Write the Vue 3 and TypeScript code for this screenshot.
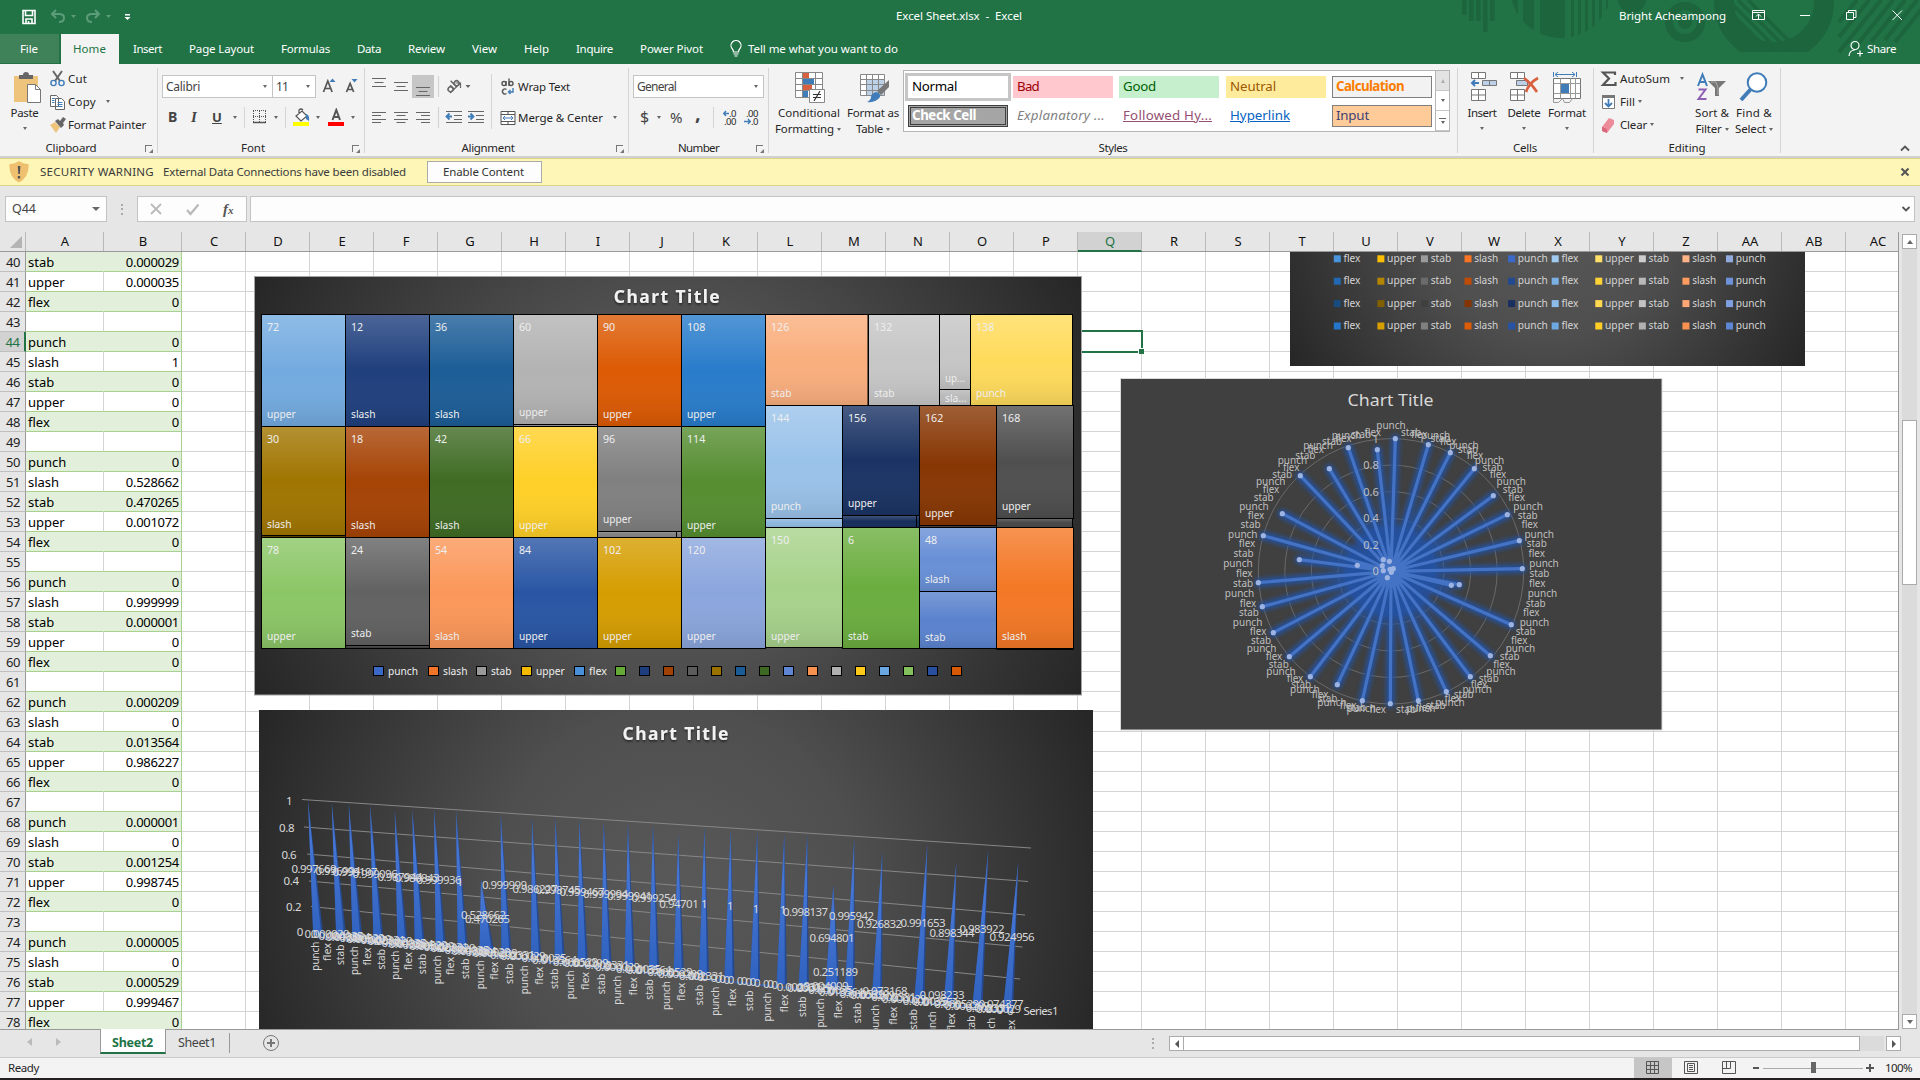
<script setup lang="ts">
interface Row { n: number; a: string; b: string }
interface Tile { x: number; y: number; r: number; b: number; c: string; n?: string; t?: string; ty?: number }

// Tightens or loosens tracking so that a label takes the given width.
const vFit = {
  mounted(el: HTMLElement, binding: { value: number }) {
    const range = document.createRange()
    range.selectNodeContents(el)
    const natural = range.getBoundingClientRect().width
    const count = (el.textContent ?? '').length
    if (count > 0) el.style.letterSpacing = `${(binding.value - natural) / count}px`
  },
}

const tabs: [string, number, number][] = [
  ['Insert', 56, 29], ['Page Layout', 92, 65], ['Formulas', 76, 49], ['Data', 51, 24], ['Review', 64, 37],
  ['View', 52, 25], ['Help', 52, 25], ['Inquire', 64, 37], ['Power Pivot', 91, 63],
]

const styleCells: { t: string; k: string; w: number }[] = [
  { t: 'Normal', k: 'normal', w: 45 }, { t: 'Bad', k: 'bad', w: 22 }, { t: 'Good', k: 'good', w: 33 },
  { t: 'Neutral', k: 'neutral', w: 46 }, { t: 'Calculation', k: 'calc', w: 68 },
  { t: 'Check Cell', k: 'check', w: 64 }, { t: 'Explanatory ...', k: 'expl', w: 88 },
  { t: 'Followed Hy...', k: 'foll', w: 89 }, { t: 'Hyperlink', k: 'link', w: 60 }, { t: 'Input', k: 'input', w: 33 },
]

const columns = ['C', ...'DEFGHIJKLMNOPQRSTUVWXYZ'.split(''), 'AA', 'AB', 'AC']

const values: string[] = [
  '0.000029', '0.000035', '0', '', '0', '1', '0', '0', '0', '', '0', '0.528662', '0.470265', '0.001072', '0', '',
  '0', '0.999999', '0.000001', '0', '0', '', '0.000209', '0', '0.013564', '0.986227', '0', '',
  '0.000001', '0', '0.001254', '0.998745', '0', '', '0.000005', '0', '0.000529', '0.999467', '0',
]
const moves = ['punch', 'slash', 'stab', 'upper', 'flex', '']
const rows: Row[] = values.map((b, i) => ({ n: 40 + i, a: moves[(i + 2) % 6], b }))

const wordWidth: Record<string, number> = {
  punch: 30, slash: 24.5, stab: 20.5, upper: 28.7, flex: 18, 'up...': 20, 'sla...': 21.5,
}

const tiles: Tile[] = [
  { x: 261.5, y: 314.5, r: 345.5, b: 426.5, c: '#73abe0', n: '72', t: 'upper' },
  { x: 345.5, y: 314.5, r: 429.5, b: 426.5, c: '#1f3f7d', n: '12', t: 'slash' },
  { x: 429.5, y: 314.5, r: 513.5, b: 426.5, c: '#1c5d97', n: '36', t: 'slash' },
  { x: 513.5, y: 314.5, r: 597.5, b: 424.5, c: '#b3b3b3', n: '60', t: 'upper', ty: 416 },
  { x: 513.5, y: 424.5, r: 597.5, b: 426.5, c: '#8c8c8c' },
  { x: 597.5, y: 314.5, r: 681.5, b: 426.5, c: '#dc5a03', n: '90', t: 'upper' },
  { x: 681.5, y: 314.5, r: 765.5, b: 426.5, c: '#287ccb', n: '108', t: 'upper' },
  { x: 261.5, y: 426.5, r: 345.5, b: 535.5, c: '#a07500', n: '30', t: 'slash', ty: 528 },
  { x: 261.5, y: 535.5, r: 345.5, b: 537.5, c: '#5a4300' },
  { x: 345.5, y: 426.5, r: 429.5, b: 537.5, c: '#a64305', n: '18', t: 'slash' },
  { x: 429.5, y: 426.5, r: 513.5, b: 537.5, c: '#3f6b24', n: '42', t: 'slash' },
  { x: 513.5, y: 426.5, r: 597.5, b: 537.5, c: '#ffd027', n: '66', t: 'upper' },
  { x: 597.5, y: 426.5, r: 681.5, b: 531.5, c: '#808080', n: '96', t: 'upper', ty: 523 },
  { x: 597.5, y: 531.5, r: 676.5, b: 537.5, c: '#808080' },
  { x: 676.5, y: 531.5, r: 681.5, b: 537.5, c: '#808080' },
  { x: 681.5, y: 426.5, r: 765.5, b: 537.5, c: '#558d30', n: '114', t: 'upper' },
  { x: 261.5, y: 537.5, r: 345.5, b: 648.5, c: '#8bc666', n: '78', t: 'upper' },
  { x: 345.5, y: 537.5, r: 429.5, b: 645.5, c: '#626262', n: '24', t: 'stab', ty: 637 },
  { x: 345.5, y: 645.5, r: 429.5, b: 648.5, c: '#3c3c3c' },
  { x: 429.5, y: 537.5, r: 513.5, b: 648.5, c: '#fb9759', n: '54', t: 'slash' },
  { x: 513.5, y: 537.5, r: 597.5, b: 648.5, c: '#2855a4', n: '84', t: 'upper' },
  { x: 597.5, y: 537.5, r: 681.5, b: 648.5, c: '#d59d00', n: '102', t: 'upper' },
  { x: 681.5, y: 537.5, r: 765.5, b: 648.5, c: '#8ba6dd', n: '120', t: 'upper' },
  { x: 765.5, y: 314.5, r: 868, b: 405.5, c: '#faae7d', n: '126', t: 'stab' },
  { x: 868.5, y: 314.5, r: 939.5, b: 405.5, c: '#c6c6c6', n: '132', t: 'stab' },
  { x: 939.5, y: 314.5, r: 970.5, b: 389.5, c: '#c6c6c6', t: 'up...', ty: 382 },
  { x: 939.5, y: 389.5, r: 970.5, b: 405.5, c: '#b8b8b8', t: 'sla...', ty: 402 },
  { x: 970.5, y: 314.5, r: 1072.5, b: 405.5, c: '#ffdb5b', n: '138', t: 'punch' },
  { x: 765.5, y: 405.5, r: 842.5, b: 518.5, c: '#9ac3ea', n: '144', t: 'punch', ty: 510 },
  { x: 765.5, y: 518.5, r: 842.5, b: 527.5, c: '#8db7de' },
  { x: 842.5, y: 405.5, r: 919.5, b: 515.5, c: '#1a3364', n: '156', t: 'upper', ty: 507 },
  { x: 842.5, y: 515.5, r: 916.5, b: 527.5, c: '#152d5b' },
  { x: 916.5, y: 515.5, r: 919.5, b: 527.5, c: '#152d5b' },
  { x: 919.5, y: 405.5, r: 996.5, b: 525.5, c: '#873603', n: '162', t: 'upper', ty: 517 },
  { x: 996.5, y: 405.5, r: 1073.5, b: 518.5, c: '#4f4f4f', n: '168', t: 'upper', ty: 510 },
  { x: 996.5, y: 518.5, r: 1072.5, b: 527.5, c: '#474747' },
  { x: 765.5, y: 527.5, r: 842.5, b: 647.5, c: '#a7d28b', n: '150', t: 'upper', ty: 640 },
  { x: 842.5, y: 527.5, r: 919.5, b: 648.5, c: '#6bae3f', n: '6', t: 'stab', ty: 640 },
  { x: 919.5, y: 527.5, r: 996.5, b: 591.5, c: '#688fd6', n: '48', t: 'slash', ty: 583 },
  { x: 919.5, y: 591.5, r: 996.5, b: 648.5, c: '#5a82cd', t: 'stab', ty: 641 },
  { x: 996.5, y: 527.5, r: 1073.5, b: 648.5, c: '#f47825', t: 'slash', ty: 640 },
]

const treeLegend: { x: number; c: string; t?: string }[] = [
  { x: 373.5, c: '#3a69c8', t: 'punch' }, { x: 428.5, c: '#f17428', t: 'slash' }, { x: 476.5, c: '#999', t: 'stab' },
  { x: 521.5, c: '#f5ba00', t: 'upper' }, { x: 574.5, c: '#4891da', t: 'flex' },
  ...['#65a939', '#1d3d7d', '#a14106', '#5c5c5c', '#9b7200', '#1c5c94', '#3d6a22', '#5e86d3', '#f6904e', '#b0b0b0',
    '#fcca1b', '#6aa6df', '#84c15c', '#274f9d', '#d75806'].map((c, i) => ({ x: 615.5 + i * 24, c })),
]

// Spikes of the 3-D series: tip x/y, base x/y.
const cones: number[][] = [
  [308, 800, 317.5, 936], [331.7, 802.5, 340.5, 938], [348.7, 803.5, 356.7, 939], [370, 804.5, 377.7, 941],
  [394.7, 810.5, 401.7, 943], [412.3, 809.5, 419, 944.5], [434, 809, 440, 946.5], [456, 810.5, 462, 948.5],
  [481, 879, 486, 952], [500.7, 814.5, 505.7, 954], [532, 817.5, 535.3, 957], [555.3, 817, 559, 959],
  [579.3, 819, 582, 961], [603.7, 821, 605.7, 963.5], [628, 823, 629, 966], [653, 825, 653.3, 969],
  [678.3, 834, 678, 971.5], [704.5, 827.5, 703.2, 976], [730.7, 829, 728.7, 979], [757.3, 831, 754.3, 982],
  [784.3, 833.5, 781, 984.5], [807.3, 834.5, 803, 987], [833.3, 885, 831.7, 990], [854.3, 838.5, 849, 993],
  [882.3, 852, 876.3, 996], [927.3, 844.5, 918.7, 999], [956.3, 862, 948, 1003], [988.3, 850, 976.7, 1007],
  [1018.3, 861.5, 1007.3, 1011],
]
const conePath = (c: number[], wide: number) => {
  const w = c[1] === 879 || c[1] === 885 ? 6.5 : 4.3
  return `M${c[0]} ${c[1]}L${c[2] + w + wide} ${c[3]}L${c[2] - w} ${c[3] - 1}Z`
}

const coneLabels: [number, number, string][] = [
  [314, 868.5, '0.997669'], [338, 870.5, '0.996994'], [355, 871.5, '0.999197'], [375, 873.5, '0.999096'], [400, 877, '0.987944'],
  [417, 877.5, '0.980843'], [439, 879.5, '0.999936'], [460, 881.5, '1'], [483.5, 915, '0.528662'], [487.5, 919, '0.470265'],
  [504.5, 885, '0.999999'], [535, 888.5, '0.986227'], [558, 889.5, '0.998745'], [582, 892, '0.999467'],
  [605.5, 893.5, '0.999994'], [629.5, 895.5, '0.999941'], [654, 898, '0.999254'], [679, 904, '0.94701'],
  [704.3, 903.5, '1'], [730.3, 905.5, '1'], [756, 908.5, '1'], [783, 910, '1'], [805.5, 912, '0.998137'],
  [832, 938, '0.694801'], [835.5, 972, '0.251189'], [851.5, 916, '0.995942'], [879.5, 924, '0.926832'],
  [923, 923, '0.991653'], [952, 933, '0.898344'], [982, 929, '0.983922'], [1012, 937, '0.924956'],
  [885, 991, '0.073168'], [942, 994.5, '0.098233'], [1001, 1004, '0.074377'], [826, 985.5, '0.004009'],
]

const lowValues = ['0.002331', '0.000029', '0.000803', '0.000035', '0.013564', '0.001254', '0.000529', '0.000209', '0.000006']
const floorLabels: [number, number, string][] = []
for (let x = 300, i = 0; x < 1016; i++) {
  const y = 932.5 + (x - 305) * 0.1115
  if (x > 690 && x < 775) {
    floorLabels.push([x, y, '0'])
    x += i % 5 === 4 ? 9 : 4.3
  } else {
    const bare = x < 302 || x > 980 || i % 3 === 2
    floorLabels.push([bare ? x : x + 20, bare ? y : y + 1.5, bare ? '0' : lowValues[i % 9]])
    x += x < 480 ? 7 : 10.5
  }
}

const categoryX = [
  226, 262, 302, 343, 382, 424, 465, 506, 548, 591, 632, 677, 721, 762, 808, 854, 897, 944, 991, 1035, 1084, 1132, 1179,
  1227, 1278, 1325, 1377, 1427, 1476, 1529, 1582, 1632, 1688, 1742, 1794, 1852, 1907, 1960, 2019, 2077, 2134, 2193, 2253, 2313,
]
const categories = categoryX.map((v, i) => ({
  x: 240 + v / 3 + 3.5, y: 700 + (725 + (v - 226) * 0.1125) / 3, t: ['punch', 'flex', 'stab'][i % 3],
}))

const spikes: number[][] = [
  [496, 86], [595, 104], [661, 128], [733, 176], [790, 257], [832, 314], [868, 392], [877, 476], [688, 524], [664, 526],
  [844, 644], [781, 737], [721, 800], [649, 845], [565, 872], [481, 881], [397, 872], [322, 824], [241, 800], [178, 740],
  [130, 668], [97, 590], [85, 518], [208, 449], [382, 466], [100, 377], [157, 311], [211, 197], [298, 176], [355, 113],
  [442, 119], [460, 449], [478, 454], [457, 467], [460, 482], [472, 503], [484, 487], [490, 476], [480, 478],
].map(([x, y]) => [1230 + x / 3, 410 + y / 3])
const spikePath = spikes.map(([x, y]) => `M1391 571.3L${x} ${y}`).join('')

const ringLabels = Array.from({ length: 87 }, (_, i) => {
  const a = (i / 87) * Math.PI * 2
  const r = i === 0 ? 146 : 138.5
  const t = ['punch', 'stab', 'flex'][i % 3]
  const w = t === 'punch' ? 29.5 : t === 'stab' ? 20 : 16.5
  const px = 1391 + Math.sin(a) * r
  return { x: i === 0 ? px - w / 2 : i < 44 ? px : px - w, y: 574.6 - Math.cos(a) * r, t, w }
})

const legendColors = [
  ['#4a94dc', '#fcc000', '#9b9b9b', '#f97523', '#3869cb', '#a0c9ef', '#ffdf69', '#cdcdcd', '#ffb487', '#91abdf'],
  ['#2168b1', '#b48500', '#6b6b6b', '#be4c06', '#234990', '#7bb0e4', '#fed335', '#b9b9b9', '#fe9b5e', '#6d92da'],
  ['#184b7e', '#806000', '#404040', '#853503', '#182f60', '#8dbcea', '#ffd950', '#c3c3c3', '#ffa774', '#7f9fe0'],
  ['#2575c8', '#d79e00', '#808080', '#db5b07', '#2753a4', '#6ea8e0', '#ffcf25', '#b1b1b1', '#fb9150', '#5d86d4'],
]
const legendNames = ['flex', 'upper', 'stab', 'slash', 'punch', 'flex', 'upper', 'stab', 'slash', 'punch']
const legendWidth: Record<string, number> = { flex: 17, upper: 29, stab: 20.5, slash: 24, punch: 30 }
</script>

<template>
  <div class="app">
    <header class="top">
      <svg class="decor" width="460" height="64" viewBox="1460 0 460 64">
        <defs>
          <clipPath id="disc"><circle cx="1561" cy="-13" r="51" /></clipPath>
          <clipPath id="half"><rect x="1700" y="0" width="220" height="52" /></clipPath>
        </defs>
        <path d="M1462 0h4.500v15h-4.500zM1469 0h4.500v21h-4.500zM1476 0h4.500v21h-4.500zM1483 0h4.500v32h-4.500zM1490 0h4.500v21h-4.500z" />
        <path clip-path="url(#disc)" d="M1509 0h9v40h-9zM1523 0h11v40h-11zM1540 0h25v40h-25zM1571 0h3v40h-3zM1578 0h3v40h-3zM1585 0h3v40h-3zM1592 0h3v40h-3zM1599 0h3v40h-3zM1606 0h2v40h-2z" />
        <circle cx="1632" cy="-1" r="14" />
        <circle cx="1685" cy="22" r="16" fill="none" stroke="#1d653d" stroke-width="8" /><circle cx="1685" cy="22" r="7" />
        <g clip-path="url(#half)">
          <circle cx="1774" cy="2" r="50" fill="none" stroke="#1d653d" stroke-width="20" />
          <path d="M1728 0l52 52M1738 0l52 52M1748 0l46 46M1718 0l52 52" fill="none" stroke="#1d653d" stroke-width="3.500" />
        </g>
        <path d="M1857 0l-18 22M1869 0l-30 37M1881 0l-42 52M1893 0l-40 50M1905 0l-34 42M1917 0l-32 40M1929 0l-34 42" fill="none" stroke="#1d653d" stroke-width="4" />
      </svg>
      <div class="title">
        <svg width="140" height="32" viewBox="0 0 140 32" fill="none">
          <path d="M23 10.500h12v13h-12zM25.500 10.500v5h7v-5M26 23.500v-4.500h6v4.500M28.500 21v2.500" stroke="#fff" stroke-width="1.600" />
          <g stroke="#5d9c79" stroke-width="2"><path d="M56 10l-4 4 4 4M52 14h7q5 0 5 4t-5 4" /><path d="M95 10l4 4-4 4M99 14h-7q-5 0-5 4t5 4" /></g>
          <path d="M71 15h5l-2.500 3zM106 15h5l-2.500 3z" fill="#5d9c79" /><path d="M125 14h5v1.400h-5zM124.500 17h6l-3 3z" fill="#fff" />
        </svg>
        <span v-fit="126" class="doc">Excel Sheet.xlsx&nbsp; -&nbsp; Excel</span>
        <span v-fit="107" class="user">Bright Acheampong</span>
        <svg class="winbtns" width="152" height="32" viewBox="1751 0 152 32" fill="none" stroke="#fff">
          <path d="M1752.500 10.500h12v9h-12zM1752.500 12.500h12M1758.500 19v-5M1756 16.500l2.500-2.500 2.500 2.500M1800 15.500h10M1846.500 12.500h7v7h-7zM1848.500 12v-1.500h7.500v7h-2M1892.500 10.500l9.500 9.500M1902 10.500l-9.500 9.500" />
        </svg>
      </div>
      <nav class="tabs">
        <span class="file"><span v-fit="18">File</span></span>
        <span class="home"><span v-fit="33">Home</span></span>
        <span v-for="t in tabs" :key="t[0]" class="tab" :style="{ width: t[1] + 'px' }"><span v-fit="t[2]">{{ t[0] }}</span></span>
        <svg class="bulb" width="14" height="20" viewBox="0 0 14 20" fill="none" stroke="#fff" stroke-width="1.200"><path d="M4.500 13q0-2-1.500-3.500a5 5 0 1 1 8 0Q9.500 11 9.500 13zM4.500 15h5M5.500 17h3" /></svg>
        <span v-fit="150">Tell me what you want to do</span>
        <svg class="person" width="16" height="18" viewBox="0 0 16 18" fill="none" stroke="#fff" stroke-width="1.200"><circle cx="7" cy="5.500" r="4" /><path d="M1 16q.5-6 6-6M9 13.500h6M12 10.500v6" /></svg>
        <span v-fit="29">Share</span>
      </nav>
    </header>

    <section class="ribbon">
      <div class="group g-clip">
        <div class="body">
          <div class="big paste">
            <svg width="30" height="32" viewBox="0 0 30 32"><path d="M1 4h24v26H1z" fill="#eec37c" /><path d="M6 3h4q0-3 3-3t3 3h4v4H6z" fill="#666" /><path d="M14.500 12.500h8l5 5v13h-13z" fill="#fff" stroke="#777" /><path d="M22.500 12.500v5h5" fill="none" stroke="#777" /></svg>
            <span v-fit="28">Paste</span><i class="caret" />
          </div>
          <div class="stack">
            <div class="line"><svg width="18" height="18" viewBox="0 0 18 18" fill="none"><path d="M4 1l7 10M13 1L6 11" stroke="#666" stroke-width="2" /><circle cx="4.500" cy="13" r="2.600" stroke="#3f7cb8" stroke-width="1.400" /><circle cx="12.500" cy="13" r="2.600" stroke="#3f7cb8" stroke-width="1.400" /></svg><span v-fit="19">Cut</span></div>
            <div class="line"><svg width="18" height="18" viewBox="0 0 18 18"><path d="M1.500 2.500h6l2 2v9h-8zM6.500 5.500h6l3 3v8h-9z" fill="#fff" stroke="#666" /><path d="M3 5.500h3M3 7.500h2.500M3 9.500h2.500M8.500 9.500h5M8.500 11.500h5M8.500 13.500h5" stroke="#3f7cb8" /></svg><span v-fit="28">Copy</span><i class="caret c10" /></div>
            <div class="line"><svg width="18" height="18" viewBox="0 0 18 18"><path d="M1 9l5-3 5 5-4 6z" fill="#eec37c" /><path d="M6 5l3-2 2 2 3-4 3 2-3 4 1 2-3 3z" fill="#666" /></svg><span v-fit="78">Format Painter</span></div>
          </div>
        </div>
        <footer><span v-fit="51" class="pl">Clipboard</span><i class="launch" /></footer>
      </div>

      <div class="group g-font">
        <div class="body col">
          <div class="r1">
            <div class="combo w111"><span v-fit="34">Calibri</span><i class="caret" /></div><div class="combo w44"><span v-fit="12">11</span><i class="caret" /></div>
            <svg width="42" height="23" viewBox="320 75 42 23"><path d="M323.500 92l4.300-11 4.300 11M325 88.500h6M346.500 92l3.600-8.500 3.600 8.500M348 89.500h4.500" fill="none" stroke="#555" stroke-width="1.700" /><path d="M329.500 82h6l-3-3.500zM351.500 79h6l-3 3.500z" fill="#3f7cb8" /></svg>
          </div>
          <div class="r2">
            <b class="ch b">B</b><i class="ch it">I</i><span class="ch un">U</span><i class="caret m1" /><u class="bar first" />
            <svg width="16" height="16" viewBox="0 0 16 16" fill="none" stroke="#555"><path d="M1.500 2v11M13.500 2v11M7.500 2v11M1 1.500h13M1 7.500h13" stroke-dasharray="1 1" /><path d="M1 13.500h13" stroke-width="1.500" /></svg><i class="caret m2" /><u class="bar m3" />
            <svg width="17" height="19" viewBox="0 0 17 19"><path d="M3 8l6-5 5 5-6 5zM6 6V2q2-2 4 0" fill="#fff" stroke="#555" stroke-width="1.200" /><path d="M13 6q4 1 3 7l-3-2z" fill="#3f7cb8" /><path d="M0 14h16v4H0z" fill="#ff0" /></svg><i class="caret m4" />
            <svg class="m5" width="17" height="19" viewBox="0 0 17 19"><path d="M4.500 12L8.300 2 12 12M5.500 9h5.500" fill="none" stroke="#555" stroke-width="2" /><path d="M0 14h16v4H0z" fill="red" /></svg><i class="caret m4" />
          </div>
        </div>
        <footer><span v-fit="24" class="fl">Font</span><i class="launch" /></footer>
      </div>

      <div class="group g-align">
        <div class="body">
          <svg width="126" height="64" viewBox="366 68 126 64" fill="none" stroke="#666" stroke-width="1.200">
            <path d="M413 75h22v23h-22z" fill="#c6c6c6" stroke="none" />
            <path d="M373 78.500h14M375.500 82.500h9M373 86.500h14M395 82.500h14M397.500 86.500h9M395 90.500h14M417 87.500h14M419.500 91.500h9M417 95.500h14" />
            <path d="M373 112.500h14M373 115.500h9M373 119.500h14M373 122.500h9M395 112.500h14M397.500 115.500h9M395 119.500h14M397.500 122.500h9M417 112.500h14M422 115.500h9M417 119.500h14M422 122.500h9" />
            <path d="M439.500 76v21M439.500 107v21" stroke="#d5d5d5" />
            <path d="M451 93l10-9.500M461.500 88v-5h-5" /><g transform="rotate(-45 453 85)"><circle cx="449" cy="87" r="2.500" stroke-width="1.500" /><path d="M451.500 84v5.500M455 81v8.500" stroke-width="1.500" /><circle cx="457.500" cy="87" r="2.500" stroke-width="1.500" /></g>
            <path d="M447 111.500h16M455 115.500h8M455 119.500h8M447 122.500h16M469 111.500h16M477 115.500h8M477 119.500h8M469 122.500h16" />
            <path d="M453 116.500h-5M450.500 113.500l-3 3 3 3M469 116.500h5M471.500 113.500l3 3-3 3" stroke="#3f7cb8" stroke-width="1.800" />
            <path d="M466.500 85h5l-2.500 3z" fill="#666" stroke="none" />
          </svg>
          <u class="bar tall" />
          <div class="wraps">
            <div class="line"><svg width="16" height="18" viewBox="0 0 16 18" fill="none" stroke="#555" stroke-width="1.400"><circle cx="4" cy="5.500" r="2" /><path d="M6 3v5M9 .5v7.500M6.500 11.500a2.500 2.500 0 1 0 0 4" /><circle cx="11" cy="5.500" r="2" /><path d="M13 10v4h-4M10.500 12L8.500 14l2 2" stroke="#3f7cb8" /></svg><span v-fit="52">Wrap Text</span></div>
            <div class="line"><svg width="16" height="16" viewBox="0 0 16 16" fill="#fff" stroke="#555"><path d="M1 1.500h14v13H1zM1 4.500h14M1 11.500h14M8 1.500v3M8 11.500v3" /><path d="M3 8h10M5 6L3 8l2 2M11 6l2 2-2 2" stroke="#3f7cb8" fill="none" /></svg><span v-fit="85">Merge &amp; Center</span><i class="caret c10" /></div>
          </div>
        </div>
        <footer><span v-fit="53" class="al">Alignment</span><i class="launch" /></footer>
      </div>

      <div class="group g-num">
        <div class="body col">
          <div class="r1"><div class="combo w131"><span v-fit="39">General</span><i class="caret" /></div></div>
          <div class="r2 num"><span class="ch big1">$</span><i class="caret" /><span class="ch pct">%</span><b class="ch comma">,</b><u class="bar" />
            <span class="dec"><span><svg width="6" height="7" viewBox="0 0 6 7"><path d="M6 3.500H1M3 1L.8 3.500 3 6" /></svg>.0</span><span>.00</span></span>
            <span class="dec"><span>.00</span><span><svg width="7" height="7" viewBox="0 0 7 7"><path d="M0 3.500h6M4 1l2.200 2.500L4 6" /></svg>.0</span></span>
          </div>
        </div>
        <footer><span v-fit="41" class="nl">Number</span><i class="launch" /></footer>
      </div>

      <div class="group g-styles">
        <div class="body">
          <div class="big cond">
            <svg width="32" height="32" viewBox="0 0 32 32"><path d="M1.500.5h27v25h-27z" fill="#fff" stroke="#888" /><path d="M1.500 6.500h27M1.500 12.500h27M1.500 18.500h27M8.500.5v25M21.500.5v25" stroke="#888" /><path d="M9 1h6v5H9zM9 13h9v5H9z" fill="#d9603f" /><path d="M9 7h11v5H9zM9 19h5v6H9z" fill="#3f7cb8" /><path d="M15.500 17.500h15v13h-15z" fill="#fff" stroke="#888" /><path d="M19 22.500h8M19 25.500h8M26 19l-6 10" stroke="#333" stroke-width="1.200" /></svg>
            <span v-fit="62" class="cf">Conditional</span><span class="two"><span v-fit="59">Formatting</span><i class="caret c3" /></span>
          </div>
          <div class="big fmt">
            <svg width="32" height="32" viewBox="0 0 32 32"><path d="M1.500 2.500h24v21h-24z" fill="#fff" stroke="#888" /><path d="M7 8h18v15H7z" fill="#bcd0e8" /><path d="M1.500 7.500h24M1.500 12.500h24M1.500 18.500h24M7.500 2.500v21M13.500 2.500v21M19.500 2.500v21" stroke="#888" fill="none" /><path d="M30 8v7l-8 8-4-4z" fill="#777" /><path d="M17 20q5 1 4 5-4 6-13 5 4-2 4-5t5-5z" fill="#3f7cb8" /></svg>
            <span v-fit="52">Format as</span><span class="two"><span v-fit="27">Table</span><i class="caret c3" /></span>
          </div>
          <div class="gallery">
            <div class="cells"><div v-for="s in styleCells" :key="s.k" class="sc" :class="s.k"><span v-fit="s.w">{{ s.t }}</span></div></div>
            <div class="gbtns"><span class="off"><i class="up" /></span><span><i class="caret" /></span><span><b /><i class="caret" /></span></div>
          </div>
        </div>
        <footer><span v-fit="29">Styles</span></footer>
      </div>

      <div class="group g-cells">
        <div class="body">
          <div class="big"><svg width="30" height="32" viewBox="0 0 30 32"><path d="M4.500.5h14v6h-14zM11.500.5v6M4.500 17.500h14v11h-14zM11.500 17.500v11M4.500 23h14" fill="#fff" stroke="#777" /><path d="M15.500 8.500h14v5h-14z" fill="#bcd0e8" stroke="#777" /><path d="M22.500 8.500v5" stroke="#777" /><path d="M5 11h7M8 8l-3 3 3 3" fill="none" stroke="#3f7cb8" stroke-width="2" /></svg><span v-fit="29">Insert</span><i class="caret" /></div>
          <div class="big del"><svg width="32" height="32" viewBox="0 0 32 32"><path d="M2.500.5h14v6h-14zM9.500.5v6M2.500 17.500h14v11h-14zM9.500 17.500v11M2.500 23h14" fill="#fff" stroke="#777" /><path d="M8.500 8.500h11v5h-11z" fill="#bcd0e8" stroke="#777" /><path d="M16 6q8 6 13 14M30 6q-9 5-12 14" fill="none" stroke="#d9603f" stroke-width="2.600" /></svg><span v-fit="33">Delete</span><i class="caret" /></div>
          <div class="big for"><svg width="30" height="32" viewBox="0 0 30 32"><path d="M1.500 6.500h27v20h-27z" fill="#fff" stroke="#777" /><path d="M1.500 11.500h27M1.500 21.500h27M8.500 6.500v20M18.500 6.500v20M23.500 6.500v20M1.500 26.500v4h5l4-4 2 4h5l3-4" fill="none" stroke="#999" /><path d="M9 12h8v9H9z" fill="#3f7cb8" /><path d="M1.500 0v5M24.500 0v5M3 2.500h20M6 0L3 2.500 6 5M20 0l3 2.500L20 5" fill="none" stroke="#3f7cb8" /></svg><span v-fit="38">Format</span><i class="caret" /></div>
        </div>
        <footer><span v-fit="24" class="cl">Cells</span></footer>
      </div>

      <div class="group g-edit">
        <div class="body">
          <div class="stack">
            <div class="line"><svg width="18" height="18" viewBox="0 0 18 18"><path d="M15 5V2.500H3l6 6-6 6.500h12.500V12" fill="none" stroke="#555" stroke-width="2.200" /></svg><span v-fit="50">AutoSum</span><i class="caret c10" /></div>
            <div class="line"><svg width="18" height="18" viewBox="0 0 18 18"><path d="M2.500 2.500h12v13h-12z" fill="#fff" stroke="#777" /><path d="M2 2h13v3H2z" fill="#777" /><path d="M8.500 6v7M5 10l3.500 3.500L12 10" fill="none" stroke="#3f7cb8" stroke-width="1.800" /></svg><span v-fit="15">Fill</span><i class="caret c3" /></div>
            <div class="line"><svg width="18" height="18" viewBox="0 0 18 18"><path d="M2 11l7-9 5 2v4l-7 9-5-2z" fill="#ec8b9a" /><path d="M2 11l5 2v4l-5-2z" fill="#d9667a" /></svg><span v-fit="27">Clear</span><i class="caret c3" /></div>
          </div>
          <div class="big sort"><svg width="32" height="32" viewBox="0 0 32 32" fill="none"><path d="M2 14L6.500 2.500 11 14M3.500 10h6" stroke="#3f7cb8" stroke-width="2" /><path d="M2.500 17.500h7L2.500 27h8" stroke="#8f5fb5" stroke-width="2" /><path d="M12 9h18l-7 7v8h-4v-8z" fill="#777" /><path d="M15 10h5l2 6v7" stroke="#aaa" /></svg><span v-fit="34">Sort &amp;</span><span class="two"><span v-fit="26">Filter</span><i class="caret c3" /></span></div>
          <div class="big find"><svg width="32" height="32" viewBox="0 0 32 32" fill="none"><circle cx="19" cy="10.500" r="9.300" stroke="#3f7cb8" stroke-width="2" fill="#fff" /><path d="M12.500 17.500L3 28" stroke="#3f7cb8" stroke-width="4" /></svg><span v-fit="36">Find &amp;</span><span class="two"><span v-fit="31">Select</span><i class="caret c3" /></span></div>
        </div>
        <footer><span v-fit="37">Editing</span></footer>
      </div>
      <svg class="collapse" width="12" height="8" viewBox="0 0 12 8"><path d="M2 6.500l4-4 4 4" fill="none" stroke="#555" stroke-width="1.800" /></svg>
    </section>

    <section class="warn">
      <svg width="20" height="22" viewBox="0 0 20 22"><path d="M10 0q4 3 9.500 3 1 13-9.500 18.500Q-.5 16 .5 3 6 3 10 0z" fill="#eec06f" /><path d="M8.800 5h2.600l-.5 8H9.300zM8.800 15h2.400v2.400H8.800z" fill="#555" /></svg>
      <span v-fit="114" class="sw">SECURITY WARNING</span><span v-fit="243" class="msg">External Data Connections have been disabled</span>
      <button><span v-fit="81">Enable Content</span></button>
      <svg class="x" width="10" height="10" viewBox="0 0 10 10"><path d="M1.500 1.500l7 7M8.500 1.500l-7 7" stroke="#555" stroke-width="2" /></svg>
    </section>

    <section class="fbar">
      <div class="name"><span v-fit="24">Q44</span><i class="caret lg" /></div>
      <i class="dots" />
      <div class="fx"><svg width="108" height="24" viewBox="138 197 108 24" fill="none"><path d="M151 204l10 10M161 204l-10 10" stroke="#b9b9b9" stroke-width="1.800" /><path d="M187 210l3.500 4 8-9.500" stroke="#b9b9b9" stroke-width="2.200" /></svg><em>f<small>x</small></em></div>
      <div class="input"><svg width="10" height="8" viewBox="0 0 10 8"><path d="M1.500 2L5 5.500 8.500 2" fill="none" stroke="#555" stroke-width="1.800" /></svg></div>
    </section>

    <main class="sheet">
      <div class="grid">
        <div class="heads"><span class="corner"><i /></span><span class="wide">A</span><span class="wide">B</span><span v-for="c in columns" :key="c" :class="{ sel: c === 'Q' }">{{ c }}</span></div>
        <div class="rows">
          <div v-for="r in rows" :key="r.n" class="row" :class="{ even: r.n % 2 === 0, cur: r.n === 44 }">
            <span class="rh">{{ r.n }}</span><span class="a">{{ r.a }}</span><span class="b">{{ r.b }}</span><span class="rest" />
          </div>
          <i class="selection"><b /></i>

          <svg class="charts" width="1898" height="777" viewBox="0 252 1898 777">
            <defs>
              <radialGradient id="shade"><stop offset="0" stop-color="#595959" /><stop offset="0.4" stop-color="#4f4f4f" /><stop offset="1" stop-color="#262626" /></radialGradient>
              <radialGradient id="dark1" href="#shade" gradientUnits="userSpaceOnUse" cx="668" cy="486" r="463" />
              <radialGradient id="dark2" href="#shade" gradientUnits="userSpaceOnUse" cx="676" cy="890" r="452" />
              <radialGradient id="dark3" href="#shade" gradientUnits="userSpaceOnUse" cx="1547" cy="215" r="298" />
              <linearGradient id="sheen" x1="0" y1="0" x2="0" y2="1"><stop offset="0" stop-color="#fff" stop-opacity=".2" /><stop offset=".5" stop-color="#fff" stop-opacity="0" /><stop offset="1" stop-color="#000" stop-opacity=".1" /></linearGradient>
              <linearGradient id="cone" x1="0" y1="0" x2="0" y2="1"><stop offset="0" stop-color="#4668ae" /><stop offset=".3" stop-color="#4676d4" /><stop offset="1" stop-color="#3062bf" /></linearGradient>
              <filter id="glow" x="-20%" y="-20%" width="140%" height="140%"><feGaussianBlur stdDeviation="2.300" /></filter>
              <filter id="drop"><feDropShadow dx="0" dy="1.500" stdDeviation="1" flood-opacity=".6" /></filter>
            </defs>

            <g class="tree">
              <rect x="254.500" y="276.500" width="827" height="418.500" fill="url(#dark1)" stroke="#a3a3a3" />
              <text class="ct" x="613.800" y="302.500" textLength="106" filter="url(#drop)">Chart Title</text>
              <g v-for="(t, i) in tiles" :key="i">
                <rect :x="t.x" :y="t.y" :width="t.r - t.x" :height="t.b - t.y" :fill="t.c" />
                <rect :x="t.x" :y="t.y" :width="t.r - t.x" :height="t.b - t.y" fill="url(#sheen)" stroke="#000" />
                <text v-if="t.n" :x="t.x + 5.500" :y="t.y + 16.500" :textLength="t.n.length * 6.100" lengthAdjust="spacingAndGlyphs">{{ t.n }}</text>
                <text v-if="t.t" :x="t.x + 5.500" :y="t.ty ?? t.b - 8.500" :textLength="wordWidth[t.t]" lengthAdjust="spacingAndGlyphs">{{ t.t }}</text>
              </g>
              <path d="M996.500 649.500h77" stroke="#000" />
              <g v-for="l in treeLegend" :key="l.x">
                <rect :x="l.x" y="666.500" width="10" height="9" :fill="l.c" stroke="#000" />
                <text v-if="l.t" :x="l.x + 14.500" y="675" :textLength="wordWidth[l.t]" lengthAdjust="spacingAndGlyphs">{{ l.t }}</text>
              </g>
            </g>

            <g class="bars">
              <rect x="259" y="710" width="834" height="350" fill="url(#dark2)" />
              <text class="ct" x="622.500" y="740" textLength="106" filter="url(#drop)">Chart Title</text>
              <path d="M302 799.500L1031 848M304 827L1028 881.500M307 854L1025 915M309 881L1022.500 947M311 906.500L1020 979" fill="none" stroke="#878787" />
              <path d="M316 937L1012 1012" stroke="#3b5f9f" stroke-width="2" />
              <path v-for="(c, i) in cones" :key="'s' + i" :d="conePath(c, 1.600)" fill="#254a92" />
              <path v-for="(c, i) in cones" :key="'c' + i" :d="conePath(c, -0.500)" fill="url(#cone)" />
              <text x="286" y="805">1</text><text x="279" y="832" textLength="15.500">0.8</text><text x="281.500" y="859" textLength="15">0.6</text><text x="283.500" y="885" textLength="15.500">0.4</text><text x="286" y="911" textLength="15.500">0.2</text>
              <text v-for="(l, i) in floorLabels" :key="'f' + i" :x="l[0]" :y="l[1] + 4" text-anchor="middle" :textLength="l[2].length > 1 ? 45 : 6">{{ l[2] }}</text>
              <text v-for="(l, i) in coneLabels" :key="'v' + i" :x="l[0]" :y="l[1] + 4" text-anchor="middle" :textLength="l[2].length > 1 ? l[2].length * 5.650 : 6">{{ l[2] }}</text>
              <text v-for="(c, i) in categories" :key="'k' + i" :transform="`translate(${c.x} ${c.y}) rotate(-90)`" text-anchor="end" :textLength="c.t === 'punch' ? 29 : c.t === 'flex' ? 18 : 20.500" lengthAdjust="spacingAndGlyphs">{{ c.t }}</text>
              <text x="1023.500" y="1015" textLength="35">Series1</text>
            </g>

            <g class="list">
              <rect x="1290" y="140" width="515" height="226" fill="url(#dark3)" />
              <template v-for="(line, r) in legendColors" :key="r">
                <g v-for="(c, i) in line" :key="i">
                  <rect :x="1333.800 + i * 43.580" :y="255.300 + r * 22.400" width="7" height="7" :fill="c" />
                  <text :x="1343.500 + i * 43.580" :y="262 + r * 22.400" :textLength="legendWidth[legendNames[i]]" lengthAdjust="spacingAndGlyphs">{{ legendNames[i] }}</text>
                </g>
              </template>
            </g>

            <g class="radar">
              <rect x="1120.500" y="378.500" width="541.500" height="351.500" fill="#404040" stroke="#d9d9d9" />
              <text class="rt" x="1347.500" y="405.500" textLength="86" lengthAdjust="spacingAndGlyphs">Chart Title</text>
              <circle v-for="k in 5" :key="k" cx="1391" cy="571.300" :r="k * 26.540" fill="none" stroke="#6a6a6a" />
              <circle cx="1391" cy="571.300" r="46" fill="#2f4a80" filter="url(#glow)" />
              <path :d="spikePath" stroke="#2453a5" stroke-width="9" stroke-linecap="round" filter="url(#glow)" opacity=".85" />
              <path :d="spikePath" stroke="#4472c4" stroke-width="3.200" stroke-linecap="round" />
              <circle v-for="(s, i) in spikes" :key="'d' + i" :cx="s[0]" :cy="s[1]" r="2.600" fill="#9db4e2" />
              <text v-for="(l, i) in ringLabels" :key="'r' + i" :x="l.x" :y="l.y" :textLength="l.w" lengthAdjust="spacingAndGlyphs">{{ l.t }}</text>
              <text v-for="k in 6" :key="'a' + k" x="1378.700" :y="602 - k * 26.540" text-anchor="end">{{ ['0', '0.2', '0.4', '0.6', '0.8', '1'][k - 1] }}</text>
            </g>
          </svg>
        </div>
      </div>
      <div class="vscroll"><span class="sb"><i class="up" /></span><div class="track"><i /></div><span class="sb"><i class="caret" /></span></div>
    </main>

    <section class="sheets">
      <svg width="100" height="24" viewBox="0 0 100 24"><path d="M32 8v8l-5-4zM56 8v8l5-4z" fill="#bbb" /></svg>
      <span class="on"><span v-fit="41">Sheet2</span></span><span class="s1"><span v-fit="38">Sheet1</span></span>
      <svg class="plus" width="18" height="18" viewBox="0 0 18 18" fill="none" stroke="#777"><circle cx="9" cy="9" r="7.500" /><path d="M5 9h8M9 5v8" stroke-width="2" /></svg>
      <i class="dots" />
      <span class="hb"><svg width="6" height="8"><path d="M5 0v8L1 4z" fill="#555" /></svg></span><div class="thumb" /><div class="htrack" /><span class="hb"><svg width="6" height="8"><path d="M1 0v8l4-4z" fill="#555" /></svg></span>
    </section>

    <footer class="status">
      <span v-fit="31">Ready</span>
      <svg width="244" height="20" viewBox="1634 1058 244 20" fill="none" stroke="#555">
        <path d="M1634 1058h38v20h-38z" fill="#c6c6c6" stroke="none" />
        <path d="M1646.500 1061.500h12v12h-12zM1650.500 1061.500v12M1654.500 1061.500v12M1646.500 1065.500h12M1646.500 1069.500h12M1684.500 1061.500h13v12h-13zM1687.500 1063.500h7v8h-7zM1689 1065.500h4M1689 1067.500h4M1689 1069.500h4M1722.500 1061.500h13v12h-13zM1726.500 1061.500v7M1730.500 1061.500v7h-8" />
        <path d="M1763 1068.500h100" stroke="#aaa" /><path d="M1811 1062h5v11h-5z" fill="#666" stroke="none" /><path d="M1753 1068h6M1866 1068h8M1870 1064v8" stroke-width="2" />
      </svg>
      <span v-fit="27" class="zoom">100%</span>
    </footer>
    <div class="edge" />
  </div>
</template>

<style>
html, body { margin: 0; overflow: hidden; }
</style>

<style scoped>
.app { width: 1920px; height: 1080px; display: flex; flex-direction: column; overflow: hidden; background: #e6e6e6; font: 11.5px/16px "Noto Sans", "Open Sans", sans-serif; color: #262626; }
.app * { box-sizing: border-box; }
svg { display: block; flex: none; }
span { white-space: nowrap; }
.top { height: 64px; background: #217346; color: #fff; position: relative; flex: none; }
.decor { position: absolute; right: 0; top: 0; fill: #1d653d; }
.title { height: 34px; display: flex; position: relative; line-height: 32px; }
.doc { margin-left: 756px; width: 126px; }
.user { margin-left: 597px; width: 107px; }
.winbtns { margin-left: 25px; }
.tabs { height: 30px; display: flex; position: relative; line-height: 30px; }
.file { width: 59px; height: 29px; background: #3f8159; padding-left: 20px; margin-right: 2px; }
.home { width: 58px; background: #f3f3f3; color: #217346; padding-left: 12px; }
.tab { padding-left: 14px; }
.bulb { margin: 5px 5px 0 12px; }
.person { margin: 6px 3px 0 950px; }

.ribbon { height: 94px; background: #f3f3f3; border-bottom: 2px solid #d0d0d0; display: flex; padding-top: 4px; flex: none; }
.group { height: 85px; border-right: 1px solid #d5d5d5; display: flex; flex-direction: column; flex: none; }
.g-clip { width: 158px; } .g-font { width: 207px; } .g-align { width: 264px; } .g-num { width: 140px; }
.g-styles { width: 689px; } .g-cells { width: 136px; } .g-edit { width: 187px; }
.body { height: 72px; display: flex; flex: none; }
.body.col { flex-direction: column; }
.group footer { height: 13px; display: flex; justify-content: center; position: relative; line-height: 16px; }
.pl { margin-right: 15px; } .fl { margin-right: 16px; } .al { margin-right: 17px; } .nl { margin-right: 14px; margin-left: 14px; } .cl { margin-right: 4px; }
.launch { position: absolute; right: 5px; top: 5px; width: 7px; height: 7px; border: solid #777; border-width: 1px 0 0 1px; }
.launch::after { content: ""; position: absolute; right: -1px; bottom: -1px; border: 2.5px solid; border-color: transparent #777 #777 transparent; }
.caret, .up { display: block; flex: none; width: 0; height: 0; border: 2.5px solid transparent; border-top: 3px solid #666; border-bottom: 0; }
.up { border-top: 0; border-bottom: 4px solid #666; }
.caret.lg { border-width: 4px 4px 0; }
.caret.c10 { margin-left: 10px; } .caret.c3 { margin-left: 3px; }
.big { display: flex; flex-direction: column; align-items: center; padding-top: 4px; line-height: 16px; flex: none; }
.big svg { margin-bottom: 1px; }
.big > .caret { margin-top: 6px; }
.two { display: flex; align-items: center; }
.paste { width: 49px; }
.paste svg { margin-left: 6px; }
.stack { display: flex; flex-direction: column; margin-top: -1px; }
.line { height: 23px; display: flex; align-items: center; }
.line > span { margin-left: 2px; }
.g-clip .stack { padding-left: 0; }
.g-clip .line > span { margin-left: 1px; }
.r1 { height: 30px; padding: 7px 0 0 4px; display: flex; }
.combo { height: 23px; border: 1px solid #c4c4c4; background: #fff; display: flex; align-items: center; justify-content: space-between; padding: 0 5px 0 3px; color: #444; font-size: 12px; }
.w111 { width: 111px; } .w44 { width: 44px; margin-left: -1px; margin-right: 4px; } .w131 { width: 131px; }
.r2 { height: 40px; display: flex; align-items: center; padding-left: 10px; margin-top: -1px; }
.ch { width: 22px; font-size: 14px; color: #444; flex: none; }
.it { font-family: "Liberation Serif", serif; font-weight: bold; font-size: 15px; padding-left: 1px; }
.un { font-weight: bold; font-size: 13px; text-decoration: underline; }
.m1 { margin-left: -1px; }
.bar { width: 1px; height: 21px; background: #d5d5d5; margin: 0 8px; flex: none; }
.bar.first { margin: 0 7px 0 7px; }
.m2 { margin-left: 6px; } .m3 { margin-left: 7px; margin-right: 7px; } .m4 { margin-left: 6px; } .m5 { margin-left: 8px; }
.bar.tall { height: 55px; margin: 6px 9px 0 0; }
.wraps { display: flex; flex-direction: column; gap: 8px; padding-top: 7px; margin-left: -1px; }
.g-align .line > span { margin-left: 2px; }
.num { padding-left: 11px; }
.big1 { font-size: 16px; width: 17px; } .pct { font-size: 15px; width: 25px; margin-left: 9px; } .comma { font-size: 20px; width: 10px; line-height: 8px; margin-top: -8px; }
.dec { width: 22px; font-size: 9.5px; line-height: 9px; letter-spacing: -.5px; display: flex; flex-direction: column; }
.dec span { display: flex; width: 15px; justify-content: flex-end; align-items: center; height: 8px; }
.dec path { fill: none; stroke: #3f7cb8; stroke-width: 1.4px; }
.num .bar { margin: 0 7px 0 8px; }
.cond { width: 78px; } .cond svg { margin-left: 4px; } .cf { margin-left: 2px; } .fmt { width: 52px; margin-right: 5px; } .fmt svg { margin-left: 3px; }
.gallery { margin-top: 2px; width: 547px; height: 62px; border: 1px solid #b5b5b5; background: #fff; display: flex; justify-content: space-between; margin-left: -1px; }
.cells { display: grid; grid-template-columns: repeat(5, 100px); gap: 6px; padding: 5px 0 0 4px; height: 56px; font-size: 13.3px; }
.sc { height: 22px; padding-left: 4px; line-height: 20px; }
.sc:nth-child(5n + 2), .sc:nth-child(5n + 3) { position: relative; left: -1px; }
.normal { color: #000; outline: 3px solid #c6c6c6; }
.bad { background: #ffc7ce; color: #9c0006; } .good { background: #c6efce; color: #006100; } .neutral { background: #ffeb9c; color: #9c5700; }
.calc { background: #f2f2f2; border: 1px solid #7f7f7f; color: #fa7d00; font-weight: bold; padding-left: 3px; line-height: 18px; }
.check { background: #a5a5a5; border: 3px double #3f3f3f; color: #fff; font-weight: bold; line-height: 14px; padding-left: 1px; }
.expl { color: #7f7f7f; font-style: italic; }
.foll { color: #954f72; text-decoration: underline; } .link { color: #0563c1; text-decoration: underline; }
.input { color: #3f3f76; }
.sc.input { background: #ffcc99; border: 1px solid #7f7f7f; padding-left: 3px; line-height: 18px; }
.gbtns { width: 14px; display: flex; flex-direction: column; border-left: 1px solid #b5b5b5; }
.gbtns span { flex: 1; border-bottom: 1px solid #c6c6c6; display: flex; flex-direction: column; align-items: center; justify-content: center; gap: 2px; }
.gbtns .off { background: #e3e3e3; } .off .up { border-bottom-color: #b0b0b0; }
.gbtns b { width: 7px; height: 1px; background: #666; }
.g-cells .big { width: 42px; } .g-cells { padding-left: 3px; }
.g-cells .for { margin-left: 1px; }
.g-edit .stack { padding: 0 0 0 6px; width: 97px; }
.sort { width: 42px; } .find { width: 42px; }
.collapse { margin: 76px 0 0 118px; }

.warn { height: 28px; background: #fdf6b7; border: solid #d7d58e; border-width: 1px 0; display: flex; align-items: center; padding: 0 10px 1px 9px; flex: none; color: #3b3b3b; }
.sw { margin-left: 11px; width: 114px; } .msg { margin-left: 9px; width: 243px; }
button { margin-left: 21px; width: 115px; height: 22px; background: #fdfdfd; border: 1px solid #ababab; font: inherit; padding: 0 2px 0 0; color: #333; }
.x { margin-left: auto; }
.fbar { height: 46px; padding: 10px 5px 0; display: flex; flex: none; }
.name, .fx, .fbar .input { height: 26px; border: 1px solid #c3c3c3; background: #fdfdfd; display: flex; align-items: center; }
.name { width: 102px; padding: 0 6px; justify-content: space-between; font-size: 12.5px; color: #444; }
.dots { width: 2px; height: 11px; margin: 8px 14px 0 14px; background: repeating-linear-gradient(#aaa 0 2px, transparent 2px 4.5px); }
.fx { width: 110px; position: relative; }
.fx em { position: absolute; left: 85px; font: italic bold 15px "Liberation Serif", serif; color: #555; }
.fx small { font-size: 11px; }
.fbar .input { flex: 1; margin-left: 3px; justify-content: flex-end; padding-right: 3px; }

.sheet { height: 798px; display: flex; flex: none; }
.grid { width: 1899px; border-right: 1px solid #999; border-bottom: 1px solid #999; overflow: hidden; flex: none; }
.heads { height: 20px; display: flex; border-bottom: 1px solid #999; font-size: 13px; line-height: 19px; color: #111; }
.heads span { width: 64px; flex: none; text-align: center; border-right: 1px solid #b9b9b9; padding-left: 1px; }
.heads .wide { width: 78px; }
.heads .corner { width: 26px; display: flex; justify-content: flex-end; align-items: flex-end; padding: 0 3px 3px 0; }
.corner i { border: 6px solid; border-color: transparent #b4b4b4 #b4b4b4 transparent; }
.heads .sel { background: #d2d2d2; color: #217346; box-shadow: 0 1px #217346, inset 0 -1px #217346; }
.rows { height: 777px; position: relative; overflow: hidden; background: #fff; }
.row { height: 20px; display: flex; font-size: 13px; line-height: 21px; color: #000; }
.row span { height: 20px; border-bottom: 1px solid #a9d08e; flex: none; }
.row .rh { width: 26px; background: #e6e6e6; border-right: 1px solid #999; border-bottom-color: #bfbfbf; text-align: center; letter-spacing: -.4px; padding-left: 1px; color: #222; }
.row .a { width: 78px; padding-left: 2px; border-right: 1px solid #d4d4d4; }
.row .b { width: 78px; padding-right: 2px; border-right: 1px solid #a9d08e; text-align: right; letter-spacing: -.3px; }
.even .a, .even .b { background: #e2efda; }
.row.even .a { border-right-color: #e2efda; }
.row.cur .rh { background: #d2d2d2; color: #217346; border-right: 2px solid #217346; }
.row .rest { flex: 1; border-color: #d4d4d4; background: repeating-linear-gradient(90deg, transparent 0 63px, #d4d4d4 63px 64px); }
.selection { position: absolute; left: 1077px; top: 78px; width: 66px; height: 23px; border: 2px solid #217346; }
.selection b { position: absolute; right: -3px; bottom: -3px; width: 6px; height: 6px; background: #217346; border: solid #fff; border-width: 1px 0 0 1px; }
.charts { position: absolute; left: 0; top: 0; font-size: 11px; fill: #e6e6e6; }
.tree text { fill: #eee; }
.charts .ct { font-size: 17.5px; font-weight: bold; fill: #f2f2f2; }
.bars text { font-size: 11.5px; fill: #d9d9d9; }
.bars .ct { font-size: 17.5px; }
.radar text { fill: #bfbfbf; }
.charts .rt { font-size: 17px; fill: #d9d9d9; }
.list text { font-size: 11px; fill: #d4d4d4; }

.vscroll { width: 15px; margin: 2px 0 1px 3px; display: flex; flex-direction: column; }
.sb { height: 15px; background: #fff; border: 1px solid #ababab; display: flex; align-items: center; justify-content: center; }
.sb .caret { border-width: 4px 3px 0; } .sb .up { border-width: 0 3px 4px; }
.track { flex: 1; background: #dbdbdb; padding-top: 171px; }
.track i { display: block; height: 165px; background: #fff; border: 1px solid #ababab; }

.sheets { height: 27px; display: flex; flex: none; font-size: 12.5px; }
.on { width: 66px; height: 25px; margin-top: -1px; background: #fff; border-bottom: 2px solid #217346; border-left: 1px solid #999; border-right: 1px solid #999; color: #217346; font-weight: bold; padding: 6px 0 0 11px; position: relative; }
.s1 { width: 64px; height: 20px; margin-top: 3px; border-right: 1px solid #999; padding: 2px 0 0 12px; color: #444; }
.plus { margin: 4px 0 0 32px; }
.sheets .dots { margin: 8px 15px 0 872px; }
.hb { width: 15px; height: 15px; margin-top: 6px; border: 1px solid #ababab; background: #fff; display: flex; align-items: center; justify-content: center; }
.thumb { width: 677px; height: 15px; margin-top: 6px; border: 1px solid #ababab; background: #fff; margin-left: -1px; }
.htrack { width: 24px; height: 15px; margin: 6px 2px 0 0; background: #dbdbdb; }
.status { height: 21px; border-top: 1px solid #c9c9c9; background: #f3f3f3; display: flex; align-items: center; padding-left: 8px; flex: none; }
.status svg { margin-left: auto; }
.zoom { width: 27px; margin: 0 8px 0 7px; }
.edge { flex: 1; background: #231f20; }
</style>
